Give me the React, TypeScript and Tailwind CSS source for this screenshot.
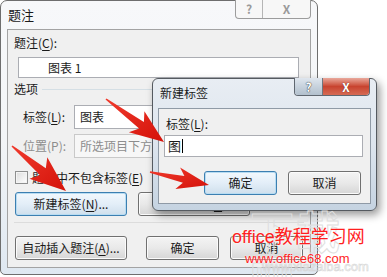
import React from 'react';

const U = ({ c }: { c: string }) => <span className="underline underline-offset-2">{c}</span>;

const Btn = ({ children, w, focus = false, className = '' }: { children: React.ReactNode; w: string; focus?: boolean; className?: string }) => (
  <div
    className={`${w} h-[24px] flex items-center justify-center rounded-[3px] border ${
      focus
        ? 'border-[#3c7fb1] bg-linear-to-b from-[#f2f8fd] via-[#e3eef8] to-[#cfdfec] shadow-[inset_0_0_0_1px_#b8dcf2]'
        : 'border-[#707070] bg-linear-to-b from-[#f4f4f4] via-[#e9e9e9] to-[#d6d6d6] shadow-[inset_0_0_0_1px_#fbfbfb]'
    } ${className}`}
  >
    {children}
  </div>
);

type ArrowProps = { x1: number; y1: number; x2: number; y2: number; head: number; hw: number; w1: number };

const Arrow = ({ x1, y1, x2, y2, head, hw, w1 }: ArrowProps) => {
  const dx = x2 - x1;
  const dy = y2 - y1;
  const len = Math.hypot(dx, dy);
  const ux = dx / len;
  const uy = dy / len;
  const nx = -uy;
  const ny = ux;
  const bx = x2 - ux * head;
  const by = y2 - uy * head;
  const back = 6;
  const pts = [
    [x1 + nx * 0.8, y1 + ny * 0.8],
    [bx + nx * w1, by + ny * w1],
    [bx - ux * back + nx * hw, by - uy * back + ny * hw],
    [x2, y2],
    [bx - ux * back - nx * hw, by - uy * back - ny * hw],
    [bx - nx * w1, by - ny * w1],
    [x1 - nx * 0.8, y1 - ny * 0.8],
  ];
  return <polygon points={pts.map((p) => p.map((v) => v.toFixed(1)).join(',')).join(' ')} fill="url(#redfill)" />;
};

const App = () => {
  return (
    <div className="relative w-[387px] h-[277px] overflow-hidden bg-white text-[12px] leading-[16px] text-[#1a1a1a] font-['Noto_Sans_CJK_SC',sans-serif]">
      {/* main dialog */}
      <div className="flex flex-col w-[318px] h-[275px] rounded-t-[7px] rounded-b-[5px] border border-[#6e6e6e] bg-linear-to-b from-[#f7f8fa] via-[#f3f5f7] to-[#dfe8f1] px-[6px] pb-[6px]">
        <div className="flex h-[28px] justify-between">
          <span className="pl-[1px] pt-[6px] text-[13px]">题注</span>
          <div className="flex h-[19px] -mt-[1px] rounded-b-[4px] border border-t-0 border-[#9c9c9c] bg-[#f7f7f7] text-[#9a9a9a]">
            <div className="w-[27px] flex items-center justify-center border-r border-[#b5b5b5] font-bold">?</div>
            <div className="w-[47px] flex items-center justify-center font-bold">X</div>
          </div>
        </div>
        <div className="flex-1 flex flex-col border border-[#a3a3a3] bg-[#f0f0f0]">
          <div className="pl-[6px] pt-[5px]">
            题注(<U c="C" />):
          </div>
          <div className="ml-[10px] mt-[6px] w-[281px] h-[21px] flex items-center border border-[#abadb3] bg-white pl-[29px]">图表 1</div>
          <div className="mt-[3px] flex items-center h-[16px] pl-[6px] pr-[8px]">
            <span>选项</span>
            <div className="ml-[4px] flex-1 h-px bg-[#d5dfe5]" />
          </div>
          <div className="mt-[8px] flex items-center h-[24px] pl-[15px]">
            <span className="w-[51px]">
              标签(<U c="L" />):
            </span>
            <div className="w-[225px] h-[24px] flex items-center border border-[#abadb3] bg-white pl-[5px]">图表</div>
          </div>
          <div className="mt-[5px] flex items-center h-[24px] pl-[15px] text-[#8d8d8d]">
            <span className="w-[51px]">位置(P):</span>
            <div className="w-[225px] h-[24px] flex items-center border border-[#c9c9c9] bg-[#f7f7f7] pl-[5px]">所选项目下方</div>
          </div>
          <div className="mt-[13px] flex items-center h-[13px] pl-[7px]">
            <div className="w-[13px] h-[13px] border border-[#8e8f8f] bg-linear-to-br from-[#dcdcdc] to-[#ffffff] shadow-[inset_0_0_0_1px_#f4f4f4]" />
            <span className="ml-[4px]">
              题注中不包含标签(<U c="E" />)
            </span>
          </div>
          <div className="mt-[8px] flex pl-[7px]">
            <Btn w="w-[112px]" focus>
              新建标签(<U c="N" />)...
            </Btn>
            <Btn w="w-[112px]" className="ml-[11px]">
              删除标签(<U c="D" />)
            </Btn>
          </div>
          <div className="mt-[6px] mx-[6px] h-px bg-[#dcdcdc]" />
          <div className="mt-[13px] flex pl-[7px]">
            <Btn w="w-[112px]">
              自动插入题注(<U c="A" />)...
            </Btn>
            <Btn w="w-[73px]" className="ml-[19px]">
              确定
            </Btn>
            <Btn w="w-[73px]" className="ml-[11px]">
              取消
            </Btn>
          </div>
        </div>
      </div>

      {/* new label dialog */}
      <div className="absolute left-[152px] top-[78px] w-[225px] h-[133px] flex flex-col rounded-[6px] border border-[#555a60] bg-linear-to-b from-[#e8edf3] via-[#dde5ee] to-[#c5d3e1] px-[5px] pb-[6px] shadow-[3px_4px_8px_rgba(0,0,0,0.4)]">
        <div className="flex h-[29px] justify-between">
          <span className="pl-[2px] pt-[6px]">新建标签</span>
          <div className="flex h-[18px] -mt-[1px] mr-[1px] rounded-b-[4px] border border-t-0 border-[#5f6770] overflow-hidden">
            <div className="w-[28px] flex items-center justify-center border-r border-[#6e7780] bg-linear-to-b from-[#dfe6ee] via-[#c7d2dd] to-[#b2c0cd] text-white font-bold [text-shadow:0_0_1px_#333,0_0_1px_#333]">?</div>
            <div className="w-[46px] flex items-center justify-center bg-linear-to-b from-[#e8a89c] via-[#c8432f] to-[#d56a54] text-white font-bold [text-shadow:0_0_1px_#5a1a10]">X</div>
          </div>
        </div>
        <div className="flex-1 flex flex-col border border-[#8f9aa6] bg-[#f0f0f0]">
          <div className="pl-[7px] pt-[7px]">
            标签(<U c="L" />):
          </div>
          <div className="ml-[5px] mt-[3px] w-[199px] h-[22px] flex items-center border border-[#abadb3] bg-white pl-[3px] text-[13px]">
            图<span className="ml-px w-px h-[14px] bg-black" />
          </div>
          <div className="mt-[14px] flex pl-[45px]">
            <Btn w="w-[73px]" focus>
              确定
            </Btn>
            <Btn w="w-[73px]" className="ml-[11px]">
              取消
            </Btn>
          </div>
        </div>
      </div>

      {/* faint background watermark */}
      <div className="absolute left-[250px] top-[206px] text-[44px] leading-[48px] font-bold text-transparent [-webkit-text-stroke:1px_#dedede] tracking-[2px]">下载吧</div>
      <div className="absolute left-[262px] top-[259px] text-[13px] leading-[16px] font-['Liberation_Sans',sans-serif] text-transparent [-webkit-text-stroke:0.6px_#d6d6d6]">www.xiazaiba.com</div>

      {/* red arrows */}
      <svg className="absolute inset-0 pointer-events-none" width="387" height="277">
        <defs>
          <linearGradient id="redfill" x1="0" y1="0" x2="1" y2="1">
            <stop offset="0" stopColor="#f03a2c" />
            <stop offset="1" stopColor="#d4120a" />
          </linearGradient>
        </defs>
        <Arrow x1={106} y1={99} x2={164} y2={142} head={28} hw={13} w1={4} />
        <Arrow x1={12} y1={146} x2={66} y2={191} head={30} hw={14} w1={4.5} />
        <Arrow x1={150} y1={172} x2={209} y2={185} head={26} hw={11} w1={3.5} />
      </svg>

      {/* site watermark */}
      <div className="absolute left-[232px] top-[226px] text-[18px] leading-[22px] text-[#ff1f1f] [text-shadow:0_0_2px_#fff] font-['Liberation_Sans','Noto_Sans_CJK_SC',sans-serif]">
        office教程学习网
      </div>
      <div className="absolute left-[245px] top-[251px] text-[13px] leading-[16px] text-[#ff1f1f] [text-shadow:0_0_2px_#fff] font-['Liberation_Sans',sans-serif]">
        www.office68.com
      </div>
    </div>
  );
};

export default App;
